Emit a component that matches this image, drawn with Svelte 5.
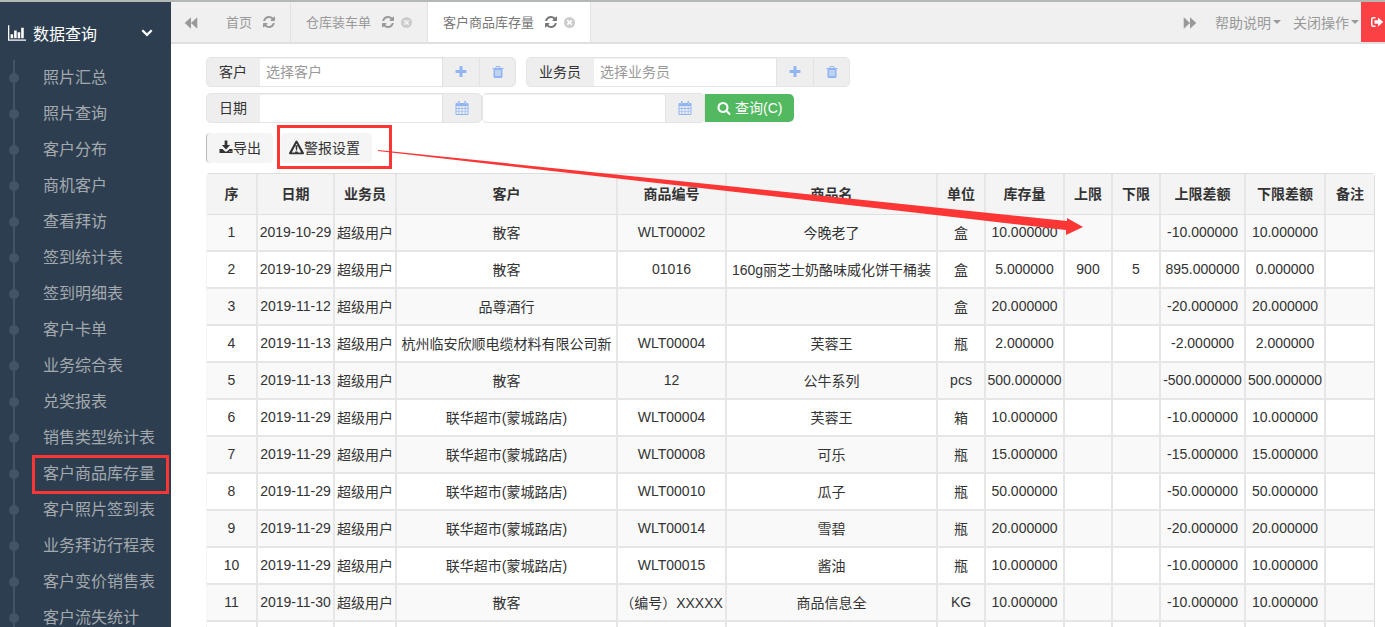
<!-- Customer stock page -->

<script lang="ts">
	const menu = [
		'照片汇总',
		'照片查询',
		'客户分布',
		'商机客户',
		'查看拜访',
		'签到统计表',
		'签到明细表',
		'客户卡单',
		'业务综合表',
		'兑奖报表',
		'销售类型统计表',
		'客户商品库存量',
		'客户照片签到表',
		'业务拜访行程表',
		'客户变价销售表',
		'客户流失统计'
	];
	const current = '客户商品库存量';

	const tabs = [
		{ title: '首页', closable: false },
		{ title: '仓库装车单', closable: true },
		{ title: '客户商品库存量', closable: true }
	];
	let activeTab = $state(2);

	const columns = [
		{ title: '序', cls: 'c-no' },
		{ title: '日期', cls: 'c-date' },
		{ title: '业务员', cls: 'c-staff' },
		{ title: '客户', cls: 'c-customer' },
		{ title: '商品编号', cls: 'c-code' },
		{ title: '商品名', cls: 'c-goods' },
		{ title: '单位', cls: 'c-small' },
		{ title: '库存量', cls: 'c-stock' },
		{ title: '上限', cls: 'c-small' },
		{ title: '下限', cls: 'c-small' },
		{ title: '上限差额', cls: 'c-upper' },
		{ title: '下限差额', cls: 'c-lower' },
		{ title: '备注', cls: 'c-note' }
	];

	const rows = [
		['1', '2019-10-29', '超级用户', '散客', 'WLT00002', '今晚老了', '盒', '10.000000', '', '', '-10.000000', '10.000000', ''],
		['2', '2019-10-29', '超级用户', '散客', '01016', '160g丽芝士奶酪味威化饼干桶装', '盒', '5.000000', '900', '5', '895.000000', '0.000000', ''],
		['3', '2019-11-12', '超级用户', '品尊酒行', '', '', '盒', '20.000000', '', '', '-20.000000', '20.000000', ''],
		['4', '2019-11-13', '超级用户', '杭州临安欣顺电缆材料有限公司新', 'WLT00004', '芙蓉王', '瓶', '2.000000', '', '', '-2.000000', '2.000000', ''],
		['5', '2019-11-13', '超级用户', '散客', '12', '公牛系列', 'pcs', '500.000000', '', '', '-500.000000', '500.000000', ''],
		['6', '2019-11-29', '超级用户', '联华超市(蒙城路店)', 'WLT00004', '芙蓉王', '箱', '10.000000', '', '', '-10.000000', '10.000000', ''],
		['7', '2019-11-29', '超级用户', '联华超市(蒙城路店)', 'WLT00008', '可乐', '瓶', '15.000000', '', '', '-15.000000', '15.000000', ''],
		['8', '2019-11-29', '超级用户', '联华超市(蒙城路店)', 'WLT00010', '瓜子', '瓶', '50.000000', '', '', '-50.000000', '50.000000', ''],
		['9', '2019-11-29', '超级用户', '联华超市(蒙城路店)', 'WLT00014', '雪碧', '瓶', '20.000000', '', '', '-20.000000', '20.000000', ''],
		['10', '2019-11-29', '超级用户', '联华超市(蒙城路店)', 'WLT00015', '酱油', '瓶', '10.000000', '', '', '-10.000000', '10.000000', ''],
		['11', '2019-11-30', '超级用户', '散客', '（编号）XXXXX', '商品信息全', 'KG', '10.000000', '', '', '-10.000000', '10.000000', ''],
		['', '', '', '', '', '', '', '', '', '', '', '', '']
	];

	// all drawn on a 1792 grid
	const icons: Record<string, string> = {
		refresh:
			'M1639 1056q0 5-1 7-64 268-268 434.5t-478 166.5q-146 0-282.5-55t-243.5-157l-129 129q-19 19-45 19t-45-19-19-45v-448q0-26 19-45t45-19h448q26 0 45 19t19 45-19 45l-137 137q71 66 161 102t187 36q134 0 250-65t186-179q11-17 53-117 8-23 30-23h192q13 0 22.5 9.5t9.5 22.5zm25-800v448q0 26-19 45t-45 19h-448q-26 0-45-19t-19-45 19-45l138-138q-148-137-349-137-134 0-250 65t-186 179q-11 17-53 117-8 23-30 23h-199q-13 0-22.5-9.5t-9.5-22.5v-7q65-268 270-434.5t480-166.5q146 0 284 55.5t245 156.5l130-129q19-19 45-19t45 19 19 45z',
		close:
			'M896 128a768 768 0 1 0 0 1536a768 768 0 1 0 0-1536zM510 680l170-170 216 216 216-216 170 170-216 216 216 216-170 170-216-216-216 216-170-170 216-216z',
		plus:
			'M1600 736v192q0 40-28 68t-68 28h-416v416q0 40-28 68t-68 28h-192q-40 0-68-28t-28-68v-416h-416q-40 0-68-28t-28-68v-192q0-40 28-68t68-28h416v-416q0-40 28-68t68-28h192q40 0 68 28t28 68v416h416q40 0 68 28t28 68z',
		trash:
			'M704 1376v-704q0-14-9-23t-23-9h-64q-14 0-23 9t-9 23v704q0 14 9 23t23 9h64q14 0 23-9t9-23zm256 0v-704q0-14-9-23t-23-9h-64q-14 0-23 9t-9 23v704q0 14 9 23t23 9h64q14 0 23-9t9-23zm256 0v-704q0-14-9-23t-23-9h-64q-14 0-23 9t-9 23v704q0 14 9 23t23 9h64q14 0 23-9t9-23zm-544-992h448l-48-117q-7-9-17-11h-317q-10 2-17 11zm928 32v64q0 14-9 23t-23 9h-96v948q0 83-47 143.5t-113 60.5h-832q-66 0-113-58.5t-47-141.5v-952h-96q-14 0-23-9t-9-23v-64q0-14 9-23t23-9h309l70-167q15-37 54-63t79-26h320q40 0 79 26t54 63l70 167h309q14 0 23 9t9 23z',
		search:
			'M1216 832q0-185-131.5-316.5t-316.5-131.5-316.5 131.5-131.5 316.5 131.5 316.5 316.5 131.5 316.5-131.5 131.5-316.5zm512 832q0 52-38 90t-90 38q-54 0-90-38l-343-342q-179 124-399 124-143 0-273.5-55.5t-225-150-150-225-55.5-273.5 55.5-273.5 150-225 225-150 273.5-55.5 273.5 55.5 225 150 150 225 55.5 273.5q0 220-124 399l343 343q37 37 37 90z',
		calendar:
			'M192 256h1408q128 0 128 128v1280q0 128-128 128h-1408q-128 0-128-128v-1280q0-128 128-128zM192 640v256h256v-256zM544 640v256h304v-256zM944 640v256h304v-256zM1344 640v256h256v-256zM192 976v288h256v-288zM544 976v288h304v-288zM944 976v288h304v-288zM1344 976v288h256v-288zM192 1344v320h256v-320zM544 1344v320h304v-320zM944 1344v320h304v-320zM1344 1344v320h256v-320zM384 0h192v256h-192zM1216 0h192v256h-192zM448 256h64v160h-64zM1280 256h64v160h-64z',
		backward: 'M896 256v1280l-704-640zM1600 256v1280l-704-640z',
		forward: 'M192 256v1280l704-640zM896 256v1280l704-640z',
		signout:
			'M704 256v192h-288q-96 0-96 96v704q0 96 96 96h288v192h-288q-288 0-288-288v-704q0-288 288-288zM576 672h448v-352l672 576-672 576v-352h-448z',
		download:
			'M720 64h352v576h352l-528 560-528-560h352zM64 1152h384l300 290q148 110 296 0l300-290h384v512h-1664zM1280 1440v96h96v-96zM1504 1440v96h96v-96z',
		warning:
			'M896 64q80 0 120 80l760 1376q56 176-100 176h-1560q-156 0-100-176l760-1376q40-80 120-80zM896 420l-560 1060h400v-100h320v100h400zM780 620h232l-50 640h-132z',
		chart:
			'M0 128h128v1408h1664v128h-1792zM256 1024h256v384h-256zM608 640h256v768h-256zM960 832h256v576h-256zM1312 384h256v1024h-256z',
		chevron: 'M896 1344l-704-704 208-208 496 496 496-496 208 208z'
	};
</script>

<svelte:head>
	<title>客户商品库存量</title>
</svelte:head>

{#snippet icon(name: string, size: number)}
	<svg class="icon" viewBox="0 0 1792 1792" width={size} height={size} aria-hidden="true">
		<path fill-rule="evenodd" d={icons[name]} />
	</svg>
{/snippet}

<div class="page">
	<aside class="sidebar">
		<button class="menu-title" type="button">
			{@render icon('chart', 18)}
			<span>数据查询</span>
			{@render icon('chevron', 14)}
		</button>
		<ul class="menu">
			{#each menu as item}
				<li>
					<a href="#top" class:marked={item === current}>{item}</a>
				</li>
			{/each}
		</ul>
	</aside>

	<div class="main">
		<header class="topbar">
			<button class="scroll-btn" type="button" aria-label="向左">{@render icon('backward', 16)}</button>
			<nav class="tabs">
				{#each tabs as tab, i}
					<div class="tab" class:active={i === activeTab}>
						<button class="tab-title" type="button" onclick={() => (activeTab = i)}>{tab.title}</button>
						<button class="tab-refresh" type="button" aria-label="刷新">{@render icon('refresh', 14)}</button>
						{#if tab.closable}
							<button class="tab-close" type="button" aria-label="关闭">{@render icon('close', 13)}</button>
						{/if}
					</div>
				{/each}
			</nav>
			<button class="scroll-btn" type="button" aria-label="向右">{@render icon('forward', 16)}</button>
			<button class="drop" type="button">帮助说明<i class="caret"></i></button>
			<button class="drop" type="button">关闭操作<i class="caret"></i></button>
			<button class="logout" type="button" aria-label="退出">{@render icon('signout', 14)}</button>
		</header>

		<main class="content">
			<form class="filters" onsubmit={(e) => e.preventDefault()}>
				<div class="line">
					<div class="group">
						<label for="customer">客户</label>
						<input id="customer" type="text" placeholder="选择客户" />
						<button class="addon" type="button" aria-label="添加客户">{@render icon('plus', 14)}</button>
						<button class="addon" type="button" aria-label="清除客户">{@render icon('trash', 14)}</button>
					</div>
					<div class="group">
						<label for="staff">业务员</label>
						<input id="staff" type="text" placeholder="选择业务员" />
						<button class="addon" type="button" aria-label="添加业务员">{@render icon('plus', 14)}</button>
						<button class="addon" type="button" aria-label="清除业务员">{@render icon('trash', 14)}</button>
					</div>
				</div>
				<div class="line dates">
					<div class="group">
						<label for="from">日期</label>
						<input id="from" type="text" />
						<button class="addon wide" type="button" aria-label="开始日期">{@render icon('calendar', 14)}</button>
					</div>
					<div class="group">
						<input id="to" type="text" aria-label="结束日期" />
						<button class="addon wide" type="button" aria-label="选择结束日期">{@render icon('calendar', 14)}</button>
					</div>
					<button class="search" type="submit">{@render icon('search', 14)}<span>查询(C)</span></button>
				</div>
			</form>

			<div class="toolbar">
				<button class="tool export" type="button">{@render icon('download', 14)}导出</button>
				<div class="alarm">
					<button class="tool" type="button">{@render icon('warning', 15)}警报设置</button>
				</div>
			</div>

			<table>
				<colgroup>
					{#each columns as col}
						<col class={col.cls} />
					{/each}
				</colgroup>
				<thead>
					<tr>
						{#each columns as col}
							<th scope="col">{col.title}</th>
						{/each}
					</tr>
				</thead>
				<tbody>
					{#each rows as row}
						<tr>
							{#each row as cell}
								<td>{cell}</td>
							{/each}
						</tr>
					{/each}
				</tbody>
			</table>
		</main>
	</div>

	<!-- pointer from the alarm button to the limit column -->
	<svg class="arrow" viewBox="0 0 706 86" width="706" height="86" aria-hidden="true">
		<path d="M0 0L689 71V68L705 77L688 85V80L0 1Z" />
	</svg>
</div>

<style>
	:global(body) {
		background: #fff;
	}
	.page {
		position: relative;
		display: flex;
		height: 100vh;
		overflow: hidden;
		box-sizing: border-box;
		border-top: 2px solid #b4b8b5;
		font-family: "Liberation Sans", "Noto Sans CJK SC", sans-serif;
		font-size: 14px;
		color: #333;
	}
	button,
	input {
		font: inherit;
		color: inherit;
		margin: 0;
		padding: 0;
		border: 0;
		background: none;
		box-sizing: border-box;
	}
	button {
		display: flex;
		align-items: center;
		justify-content: center;
		flex: none;
		white-space: nowrap;
		cursor: pointer;
	}
	.icon {
		display: block;
		flex: none;
		fill: currentColor;
	}

	/* sidebar */
	.sidebar {
		flex: none;
		width: 171px;
		background: #2c3e50;
	}
	.menu-title {
		width: 100%;
		height: 58px;
		padding: 6px 17px 2px 8px;
		gap: 7px;
		font-size: 16px;
		color: #fff;
	}
	.menu-title span {
		flex: 1;
		text-align: left;
	}
	.menu {
		margin: 0 0 0 13px;
		padding: 0;
		list-style: none;
		border-left: 2px solid #425466;
	}
	.menu li {
		display: flex;
		align-items: center;
		height: 36px;
	}
	.menu li::before {
		content: "";
		width: 10px;
		height: 10px;
		margin-left: -6px;
		border-radius: 50%;
		background: #425466;
	}
	.menu a {
		position: relative;
		margin-left: 24px;
		font-size: 16px;
		line-height: 36px;
		color: #a4a9ae;
		text-decoration: none;
		white-space: nowrap;
	}
	.marked::after {
		content: "";
		position: absolute;
		inset: -1px -14px -2px -11px;
		border: 3px solid #fc3535;
	}

	/* top bar */
	.main {
		flex: 1;
		min-width: 0;
	}
	.topbar {
		display: flex;
		height: 42px;
		box-sizing: border-box;
		overflow: hidden;
		background: #f0f0f0;
		border-bottom: 2px solid #e0e0e0;
		color: #999;
	}
	.scroll-btn {
		width: 40px;
		padding-top: 2px;
	}
	.tabs {
		display: flex;
		flex: 1;
		min-width: 0;
		font-size: 13px;
	}
	.tab {
		display: flex;
		align-items: center;
		padding: 0 14px 0 15px;
		border-right: 1px solid #e2e2e2;
	}
	.tab-title {
		padding-bottom: 2px;
	}
	.tab.active {
		background: #fff;
		color: #777;
	}
	.tab-refresh {
		margin-left: 10px;
	}
	.tab-close {
		margin-left: 5px;
		color: #ccc;
	}
	.drop {
		padding: 0 2px 0 5px;
		gap: 2px;
		margin-right: 5px;
	}
	.drop + .drop {
		margin-right: 0;
	}
	.caret {
		border: 4px solid transparent;
		border-top-color: currentColor;
		border-bottom: 0;
	}
	.logout {
		width: 24px;
		padding-left: 9px;
		justify-content: flex-start;
		background: #fc4145;
		color: #fff;
	}

	/* filters */
	.content {
		padding: 13px 10px 0 35px;
	}
	.filters {
		display: flex;
		flex-direction: column;
		gap: 6px;
	}
	.line {
		display: flex;
		align-items: center;
		gap: 10px;
	}
	.dates {
		gap: 0;
	}
	.group {
		display: flex;
		height: 30px;
		box-sizing: border-box;
		border: 1px solid #e4e4e4;
		border-radius: 5px;
		background: #eee;
		overflow: hidden;
	}
	.group label {
		padding: 0 13px 0 12px;
		line-height: 28px;
		white-space: nowrap;
	}
	.group input {
		width: 182px;
		padding: 0 6px 2px;
		background: #fff;
		border-top: 1px solid #eee;
		outline: none;
	}
	.group input::placeholder {
		color: #999;
		opacity: 1;
	}
	.addon {
		width: 37px;
		border-left: 1px solid #e2e2e2;
		color: #91b4f3;
	}
	.addon + .addon {
		width: 36px;
	}
	.addon.wide {
		width: 39px;
	}
	.search {
		height: 28px;
		padding: 0 12px;
		gap: 4px;
		border-radius: 0 5px 5px 0;
		background: #53b961;
		color: #fff;
	}
	.search span {
		padding-bottom: 2px;
	}

	/* toolbar */
	.toolbar {
		display: flex;
		gap: 8px;
		padding: 10px 0;
	}
	.tool {
		height: 30px;
		padding: 0 12px 2px;
		border-radius: 4px;
		background: #f5f5f5;
	}
	.export {
		border-left: 1px solid #bbb;
	}
	.alarm {
		position: relative;
	}
	.alarm .tool {
		padding: 0 12px 2px 8px;
	}
	.alarm::after {
		content: "";
		position: absolute;
		inset: -8px -20px -6px -4px;
		border: 3px solid #fc3535;
		pointer-events: none;
	}

	/* table */
	table {
		width: 100%;
		table-layout: fixed;
		border-collapse: separate;
		border-spacing: 0;
		border-top: 1px solid #ddd;
		border-left: 1px solid #f5f5f5;
		border-right: 1px solid #ddd;
		border-radius: 4px 4px 0 0;
	}
	.c-no {
		width: 51px;
	}
	.c-date {
		width: 77px;
	}
	.c-staff {
		width: 62px;
	}
	.c-code {
		width: 109px;
	}
	.c-goods {
		width: 211px;
	}
	.c-small,
	.c-note {
		width: 48px;
	}
	.c-stock {
		width: 79px;
	}
	.c-upper {
		width: 85px;
	}
	.c-lower {
		width: 80px;
	}
	th,
	td {
		box-sizing: border-box;
		padding: 0 0 2px;
		text-align: center;
		white-space: nowrap;
		border-right: 2px solid #e6e6e6;
	}
	th {
		height: 41px;
		background: #f4f4f4;
		border-bottom: 1px solid #e0e0e0;
	}
	td {
		height: 37px;
		border-bottom: 2px solid #e6e6e6;
	}
	th:last-child,
	td:last-child {
		border-right: 0;
	}
	tbody tr:nth-child(odd) {
		background: #f9f9f9;
	}

	.arrow {
		position: absolute;
		left: 378px;
		top: 148px;
		fill: #fc3535;
		pointer-events: none;
	}
</style>
